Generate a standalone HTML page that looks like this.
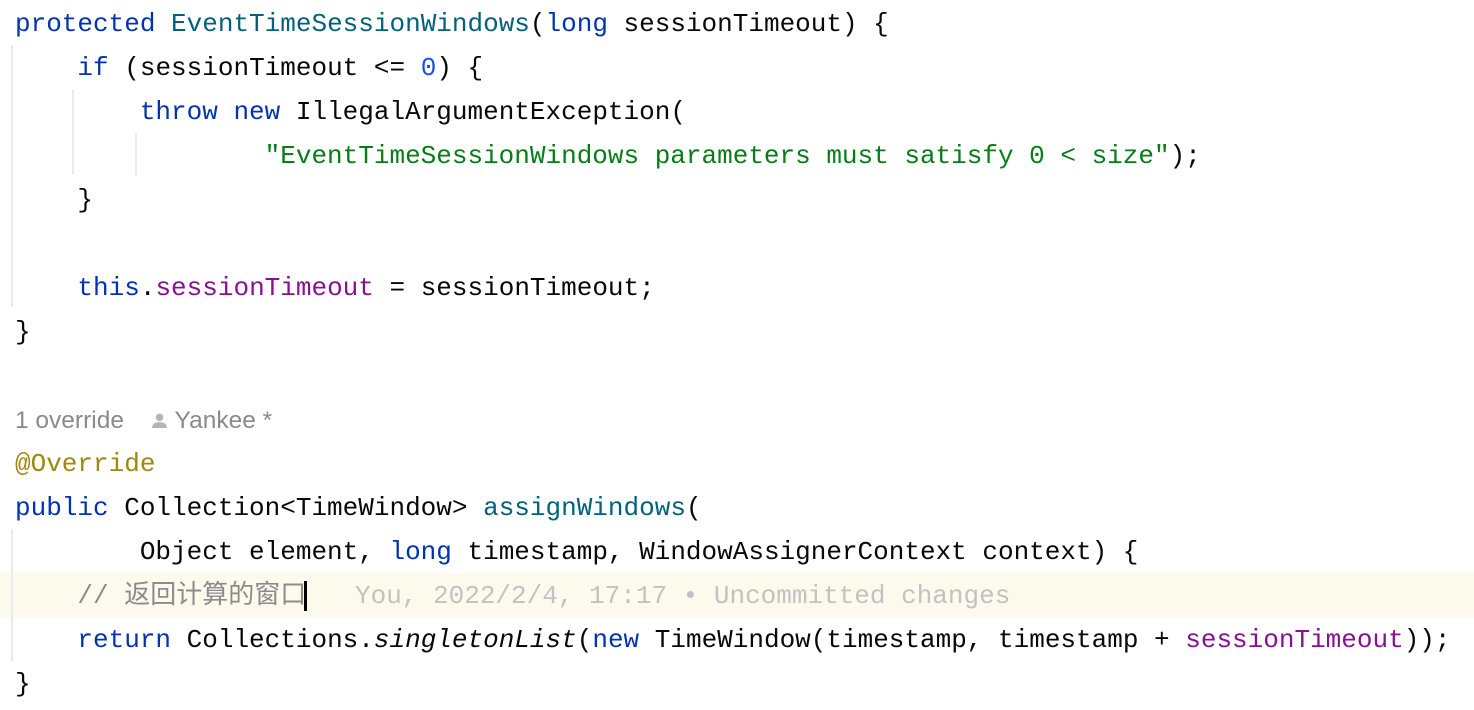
<!DOCTYPE html>
<html><head><meta charset="utf-8"><style>
body{margin:0;background:#fff;width:1474px;height:710px;overflow:hidden;position:relative}
.l{position:absolute;left:15px;height:44px;line-height:44px;margin-top:2px;font-family:"Liberation Mono","Noto Sans CJK SC",monospace;font-size:26px;white-space:pre;color:#080808}
.k{color:#0033b3}.f{color:#00627a}.s{color:#067d17}.n{color:#1750eb}.p{color:#871094}.a{color:#9e880d}.c{color:#8c8c8c}
.g{position:absolute;width:2px;background:#ebebeb}
.hint{position:absolute;left:15px;top:399px;height:44px;line-height:44px;font-family:"Liberation Sans",sans-serif;font-size:24.5px;color:#8a8a8a;white-space:pre}
</style></head><body>
<div style="position:absolute;left:0;top:573px;width:1474px;height:44px;background:#fcfaed"></div>
<div class="g" style="left:11px;top:45px;height:262px"></div>
<div class="g" style="left:72px;top:89px;height:86px"></div>
<div class="g" style="left:135px;top:133px;height:43px"></div>
<div class="g" style="left:11px;top:529px;height:132px"></div>
<div class="l" style="top:0"><span class="k">protected</span> <span class="f">EventTimeSessionWindows</span>(<span class="k">long</span> sessionTimeout) {</div>
<div class="l" style="top:44px">    <span class="k">if</span> (sessionTimeout &lt;= <span class="n">0</span>) {</div>
<div class="l" style="top:88px">        <span class="k">throw new</span> IllegalArgumentException(</div>
<div class="l" style="top:132px">                <span class="s">"EventTimeSessionWindows parameters must satisfy 0 &lt; size"</span>);</div>
<div class="l" style="top:176px">    }</div>
<div class="l" style="top:264px">    <span class="k">this</span>.<span class="p">sessionTimeout</span> = sessionTimeout;</div>
<div class="l" style="top:308px">}</div>
<div class="hint">1 override    <svg width="17" height="17" viewBox="0 0 16 16" style="vertical-align:-1px"><circle cx="8" cy="5" r="3.5" fill="#b5b5b5"/><path d="M1 15c0-4 3-5.5 7-5.5s7 1.5 7 5.5z" fill="#b5b5b5"/></svg> Yankee *</div>
<div class="l" style="top:440px"><span class="a">@Override</span></div>
<div class="l" style="top:484px"><span class="k">public</span> Collection&lt;TimeWindow&gt; <span class="f">assignWindows</span>(</div>
<div class="l" style="top:528px">        Object element, <span class="k">long</span> timestamp, WindowAssignerContext context) {</div>
<div class="l" style="top:572px">    <span class="c">// 返回计算的窗口</span></div>
<div style="position:absolute;left:304px;top:581px;width:3px;height:30px;background:#000"></div>
<div class="l" style="top:572px;left:355px;color:#c2c2c2">You, 2022/2/4, 17:17 • Uncommitted changes</div>
<div class="l" style="top:616px">    <span class="k">return</span> Collections.<i>singletonList</i>(<span class="k">new</span> TimeWindow(timestamp, timestamp + <span class="p">sessionTimeout</span>));</div>
<div class="l" style="top:660px">}</div>
</body></html>
